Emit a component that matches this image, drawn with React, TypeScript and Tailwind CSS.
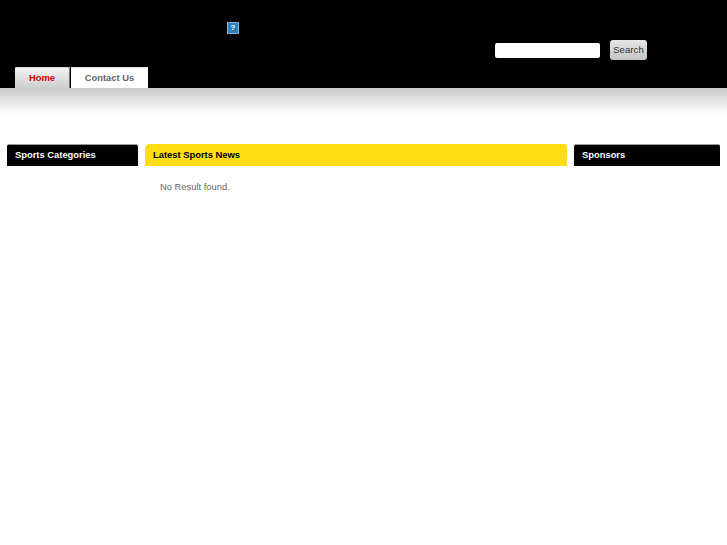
const panelTitle = "text-[9.4px] font-bold h-[22px] pl-2 flex items-center";

const App = () => {
  return (
    <div className="min-h-[545px] bg-white font-['Liberation_Sans',sans-serif]">
      <header className="h-[88px] bg-black flex flex-col">
        <div className="h-[67px] flex">
          <div className="pl-[227px] pt-[22px]">
            {/* broken image icon */}
            <div className="w-[12px] h-[12px] bg-[#2f7fbd] border border-[#8fb4d0] flex items-center justify-center text-white text-[8px] leading-none font-bold">
              ?
            </div>
          </div>
          <div className="ml-[256px] pt-[40px] flex items-start gap-[10px]">
            <input className="w-[105px] h-[15px] mt-[3px] bg-white rounded-[2px] outline-none" />
            <button className="w-[37px] h-[20px] rounded-[3px] bg-gradient-to-b from-[#e6e6e6] to-[#c4c4c8] text-[#333] text-[9.5px] tracking-[0.1px] leading-none">
              Search
            </button>
          </div>
        </div>
        <nav className="flex h-[21px] pl-[15px] gap-[1px] text-[9.4px] font-bold">
          <a className="relative w-[55px] pt-px flex items-center justify-center border-t border-t-[#d8d8d8] border-r border-r-[#777] bg-gradient-to-b from-[#f4f4f4] to-[#cdcdcd] text-[#d40000]">
            Home
            <span className="absolute -top-px left-0 w-px h-px bg-[#8fae2a]" />
            <span className="absolute -top-px right-0 w-px h-px bg-[#8fae2a]" />
          </a>
          <a className="w-[77px] pt-px flex items-center justify-center border-t border-t-[#d8d8d8] bg-white text-[#666]">
            Contact Us
          </a>
        </nav>
      </header>
      <div className="h-[26px] bg-gradient-to-b from-[#c9c9c9] to-white" />
      <main className="flex pt-[30px] pl-[7px] gap-[7px]">
        <aside className="w-[131px]">
          <h3 className={`${panelTitle} bg-black text-white rounded-t-[2px] border-t border-t-[#999]`}>Sports Categories</h3>
        </aside>
        <section className="w-[422px]">
          <h3 className={`${panelTitle} pt-px bg-[#ffdc14] text-black rounded-tl-[5px] rounded-tr-[3px]`}>Latest Sports News</h3>
          <p className="pl-[15px] pt-[14px] text-[9.4px] leading-[13px] text-[#666]">No Result found.</p>
        </section>
        <aside className="w-[146px]">
          <h3 className={`${panelTitle} bg-black text-white rounded-t-[2px] border-t border-t-[#999]`}>Sponsors</h3>
        </aside>
      </main>
    </div>
  );
};

export default App;
